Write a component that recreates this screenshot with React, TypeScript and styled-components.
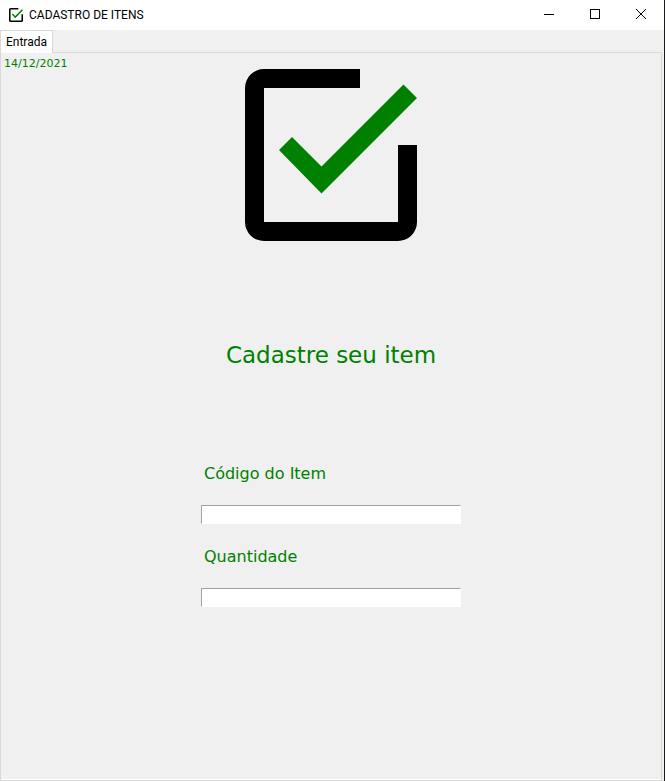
import React from "react";
import styled, { createGlobalStyle } from "styled-components";

const GlobalStyle = createGlobalStyle`
  *, *::before, *::after { box-sizing: border-box; }
  body { margin: 0; background: #f0f0f0; }
`;

const Window = styled.div`
  min-height: 100vh;
  display: flex;
  flex-direction: column;
  border-right: 1px solid #181a20;
  background: #f0f0f0;
  color: #000;
  font: 12px/16px "Noto Sans", "Open Sans", sans-serif;
`;

const TitleBar = styled.header`
  height: 30px;
  display: flex;
  align-items: center;
  background: #fff;
  padding-left: 9px;
`;

const Title = styled.h1`
  flex: 1;
  margin: 0 0 0 6px;
  font: 12px/16px Roboto, "Open Sans", sans-serif;
`;

const WindowButton = styled.button`
  width: 46px;
  height: 30px;
  padding: 0 0 2px;
  border: 0;
  background: transparent;
  display: flex;
  align-items: center;
  justify-content: center;
`;

const TabList = styled.div`
  display: flex;
  height: 22px;
`;

const Tab = styled.button`
  height: 23px;
  padding: 0 5px;
  border: 1px solid #d9d9d9;
  border-bottom: 0;
  background: #fff;
  color: #000;
  font: 12px/16px Roboto, "Open Sans", sans-serif;
  position: relative;
  z-index: 1;
`;

const Pane = styled.main`
  flex: 1;
  margin-right: 2px;
  border: 1px solid #d9d9d9;
  box-shadow: inset 0 -1px #fff;
  color: #008000;
  font-family: Verdana, "DejaVu Sans", sans-serif;
  display: flex;
  flex-direction: column;
  align-items: center;
`;

const DateText = styled.time`
  align-self: flex-start;
  height: 16px;
  padding: 3px 0 0 3px;
  font-size: 11px;
  line-height: 16px;
`;

const Heading = styled.h2`
  margin: 100px 0 94px;
  font-size: 23px;
  line-height: 28px;
  font-weight: 400;
`;

const Form = styled.form`
  width: 260px;
  display: flex;
  flex-direction: column;
  gap: 22px;
`;

const Field = styled.label`
  display: flex;
  flex-direction: column;
  gap: 20px;
  font-size: 16px;
  line-height: 22px;
`;

const Caption = styled.span`
  padding-left: 3px;
`;

const Input = styled.input`
  width: 100%;
  height: 19px;
  padding: 0 3px;
  border: 1px solid #fff;
  border-top-color: #a0a0a0;
  border-left-color: #a0a0a0;
  border-radius: 0;
  background: #fff;
  font: 12px/16px "Noto Sans", sans-serif;
  outline: none;
`;

const CheckLogo = ({ size }: { size: number }) => (
  <svg width={size} height={size} viewBox="0 0 172 172" aria-hidden="true">
    <path
      fill="#000"
      d="M115 0V19H19V153H153V76H172V153A19 19 0 0 1 153 172H19A19 19 0 0 1 0 153V19A19 19 0 0 1 19 0Z"
    />
    <path fill="#008000" d="M34 81L47 68L76.500 97.500L158.500 15.500L172 29L76.500 124.500Z" />
  </svg>
);

const fields = [
  { id: "codigo", label: "Código do Item" },
  { id: "quantidade", label: "Quantidade" },
];

export default function App() {
  return (
    <>
      <GlobalStyle />
      <Window>
        <TitleBar>
          <CheckLogo size={14} />
          <Title>CADASTRO DE ITENS</Title>
          <WindowButton type="button" aria-label="Minimizar">
            <svg width="10" height="10" shapeRendering="crispEdges">
              <path d="M0 5.500H10" stroke="#000" />
            </svg>
          </WindowButton>
          <WindowButton type="button" aria-label="Maximizar">
            <svg width="10" height="10" shapeRendering="crispEdges">
              <rect x="0.500" y="0.500" width="9" height="9" fill="none" stroke="#000" />
            </svg>
          </WindowButton>
          <WindowButton type="button" aria-label="Fechar">
            <svg width="10" height="10">
              <path d="M0 0L10 10M10 0L0 10" stroke="#000" />
            </svg>
          </WindowButton>
        </TitleBar>
        <TabList role="tablist">
          <Tab type="button" role="tab" aria-selected="true">
            Entrada
          </Tab>
        </TabList>
        <Pane role="tabpanel">
          <DateText dateTime="2021-12-14">14/12/2021</DateText>
          <CheckLogo size={172} />
          <Heading>Cadastre seu item</Heading>
          <Form>
            {fields.map(({ id, label }) => (
              <Field key={id} htmlFor={id}>
                <Caption>{label}</Caption>
                <Input id={id} name={id} type="text" />
              </Field>
            ))}
          </Form>
        </Pane>
      </Window>
    </>
  );
}
